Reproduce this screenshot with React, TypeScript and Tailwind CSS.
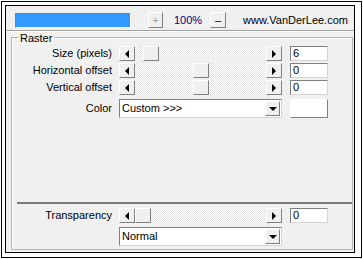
import React from "react";

// classic 3D bevels
const raised =
  "border border-t-white border-l-white border-r-[#808080] border-b-[#808080] bg-[#f0f0f0]";
const sunken =
  "border border-t-[#808080] border-l-[#808080] border-r-[#d4d4d4] border-b-[#d4d4d4] bg-white";

function LeftArrow() {
  return <div className="w-0 h-0 border-y-[4px] border-y-transparent border-r-[4px] border-r-black" />;
}

function RightArrow() {
  return <div className="w-0 h-0 border-y-[4px] border-y-transparent border-l-[4px] border-l-black" />;
}

function DownArrow() {
  return <div className="w-0 h-0 border-x-[4px] border-x-transparent border-t-[4px] border-t-black" />;
}

function Slider({ thumb }: { thumb: string }) {
  return (
    <div className="flex h-[15px] w-[163px]">
      <div className={`${raised} w-[16px] h-full flex items-center justify-center`}>
        <LeftArrow />
      </div>
      <div className="flex-1 h-full bg-[repeating-conic-gradient(#e4e4e4_0_25%,#ffffff_0_50%)] bg-[length:2px_2px]">
        <div className={`${raised} ${thumb} w-[16px] h-full`} />
      </div>
      <div className={`${raised} w-[16px] h-full flex items-center justify-center`}>
        <RightArrow />
      </div>
    </div>
  );
}

function Combo({ text }: { text: string }) {
  return (
    <div className={`${sunken} w-[163px] h-[19px] flex items-center`}>
      <span className="flex-1 pl-[2px] leading-[15px]">{text}</span>
      <div className={`${raised} w-[15px] h-[15px] mr-px flex items-center justify-center`}>
        <DownArrow />
      </div>
    </div>
  );
}

function NumBox({ value }: { value: string }) {
  return (
    <div className={`${sunken} ml-[8px] w-[38px] h-[15px] pl-[2px] leading-[13px]`}>{value}</div>
  );
}

function SliderRow({ label, value, thumb, className }: { label: string; value: string; thumb: string; className?: string }) {
  return (
    <div className={`flex items-center h-[15px] ${className ?? ""}`}>
      <div className="w-[100px] text-right">{label}</div>
      <div className="ml-[7px]">
        <Slider thumb={thumb} />
      </div>
      <NumBox value={value} />
    </div>
  );
}

export default function App() {
  return (
    <div className="w-[363px] h-[259px] bg-white pt-px pl-px text-[11px] text-black font-['Liberation_Sans',Arial,sans-serif]">
      <div className="w-[361px] h-[257px] border border-black pt-[3px] pl-[3px]">
        <div className="w-[350px] h-[248px] border border-black bg-[#f0f0f0] flex flex-col pt-[6px]">
          {/* zoom bar */}
          <div className="flex items-center h-[16px]">
            <div className="ml-[9px] w-[116px] h-[15px] bg-[#3399ff] border border-t-[#808080] border-l-[#808080] border-r-white border-b-white" />
            <div className={`${raised} ml-[17px] w-[15px] h-[16px] flex items-center justify-center text-[#a0a0a0] leading-none`}>
              +
            </div>
            <div className="w-[47px] pl-[11px] text-[#000080]">100%</div>
            <div className={`${raised} w-[16px] h-[16px] flex items-center justify-center leading-none`}>
              –
            </div>
            <div className="ml-[17px]">www.VanDerLee.com</div>
          </div>
          <div className="mt-[2px] h-[2px] border-t border-t-[#a0a0a0] border-b border-b-white" />

          {/* Raster group */}
          <div className="relative mt-[5px] ml-[5px] w-[342px] h-[213px] border border-[#b4b4b4] shadow-[inset_1px_1px_0_#ffffff] flex flex-col pt-[8px] pb-[3px]">
            <div className="absolute -top-[6px] left-[6px] h-[12px] px-[2px] bg-[#f4f0e6] leading-[12px]">Raster</div>

            <SliderRow label="Size (pixels)" value="6" thumb="ml-[8px]" />
            <SliderRow label="Horizontal offset" value="0" thumb="ml-[58px]" className="mt-[2px]" />
            <SliderRow label="Vertical offset" value="0" thumb="ml-[58px]" className="mt-[2px]" />

            <div className="flex items-center h-[19px] mt-[4px]">
              <div className="w-[100px] text-right">Color</div>
              <div className="ml-[7px]">
                <Combo text="Custom >>>" />
              </div>
              <div className={`${raised} ml-[8px] w-[38px] h-[19px] bg-white`} />
            </div>

            <div className="flex-1" />

            <div className="ml-[5px] w-[335px] h-[2px] bg-[#7a7a7a]" />
            <SliderRow label="Transparency" value="0" thumb="ml-0" className="mt-[4px]" />
            <div className="ml-[107px] mt-[4px]">
              <Combo text="Normal" />
            </div>
          </div>
        </div>
      </div>
    </div>
  );
}
